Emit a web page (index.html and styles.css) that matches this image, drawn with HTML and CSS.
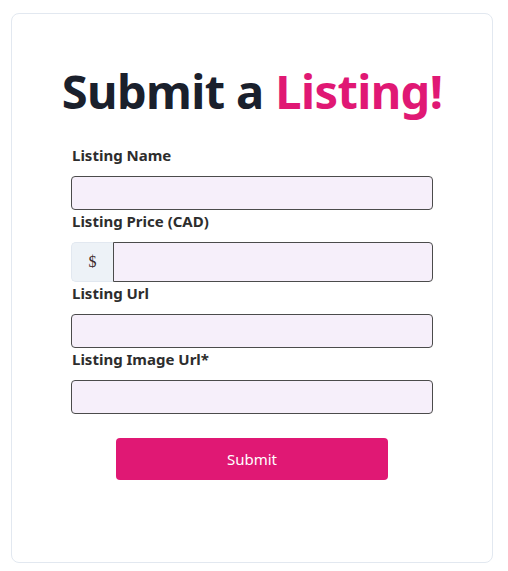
FILE: index.html
```html
<!DOCTYPE html>
<html>
<head>
<meta charset="utf-8">
<link rel="stylesheet" href="styles.css">
</head>
<body>
<div class="card">
  <h1 class="title">Submit a <span class="accent">Listing!</span></h1>
  <form class="form">
    <label class="label">Listing Name</label>
    <input class="input" type="text">
    <label class="label">Listing Price (CAD)</label>
    <div class="group">
      <span class="addon">$</span>
      <input class="input group-input" type="text">
    </div>
    <label class="label">Listing Url</label>
    <input class="input" type="text">
    <label class="label">Listing Image Url*</label>
    <input class="input" type="text">
    <div class="actions">
      <button class="btn" type="button">Submit</button>
    </div>
  </form>
</div>
</body>
</html>
```
FILE: styles.css
```css
html, body {
  margin: 0;
  padding: 0;
  background: #ffffff;
}
body {
  padding: 13px 15px 0 11px;
  font-family: "Noto Sans", "Open Sans", sans-serif;
}
.card {
  box-sizing: border-box;
  width: 482px;
  height: 550px;
  border: 1px solid #e2e8f0;
  border-radius: 8px;
  display: flex;
  flex-direction: column;
  align-items: center;
}
.title {
  margin: 44px 0 0 0;
  font-size: 47px;
  line-height: 66px;
  font-weight: 700;
  color: #1a202c;
  letter-spacing: -0.6px;
}
.accent {
  color: #e01874;
}
.form {
  width: 362px;
  display: flex;
  flex-direction: column;
  margin-top: 20px;
}
.label {
  display: block;
  font-size: 15px;
  line-height: 22px;
  font-weight: 700;
  color: #2d2d2d;
  margin-bottom: 10px;
  padding-left: 1px;
}
.input {
  box-sizing: border-box;
  height: 34px;
  width: 100%;
  margin: 0;
  background: #f6effa;
  border: 1px solid #4b4b4b;
  border-radius: 4px;
  outline: none;
}
.group {
  display: flex;
  height: 40px;
}
.addon {
  box-sizing: border-box;
  width: 42px;
  display: flex;
  align-items: center;
  justify-content: center;
  background: #edf2f7;
  border: 1px solid #e2e8f0;
  border-right: none;
  border-radius: 5px 0 0 5px;
  font-family: "Liberation Serif", serif;
  font-size: 16px;
  color: #3a2a2a;
}
.group-input {
  flex: 1;
  height: 40px;
  border-radius: 0 4px 4px 0;
}
.actions {
  display: flex;
  justify-content: center;
  margin-top: 24px;
}
.btn {
  width: 272px;
  height: 42px;
  border: none;
  border-radius: 4px;
  background: #e01874;
  color: #ffffff;
  font-family: "Noto Sans", "Open Sans", sans-serif;
  font-size: 15px;
  cursor: pointer;
}
```
